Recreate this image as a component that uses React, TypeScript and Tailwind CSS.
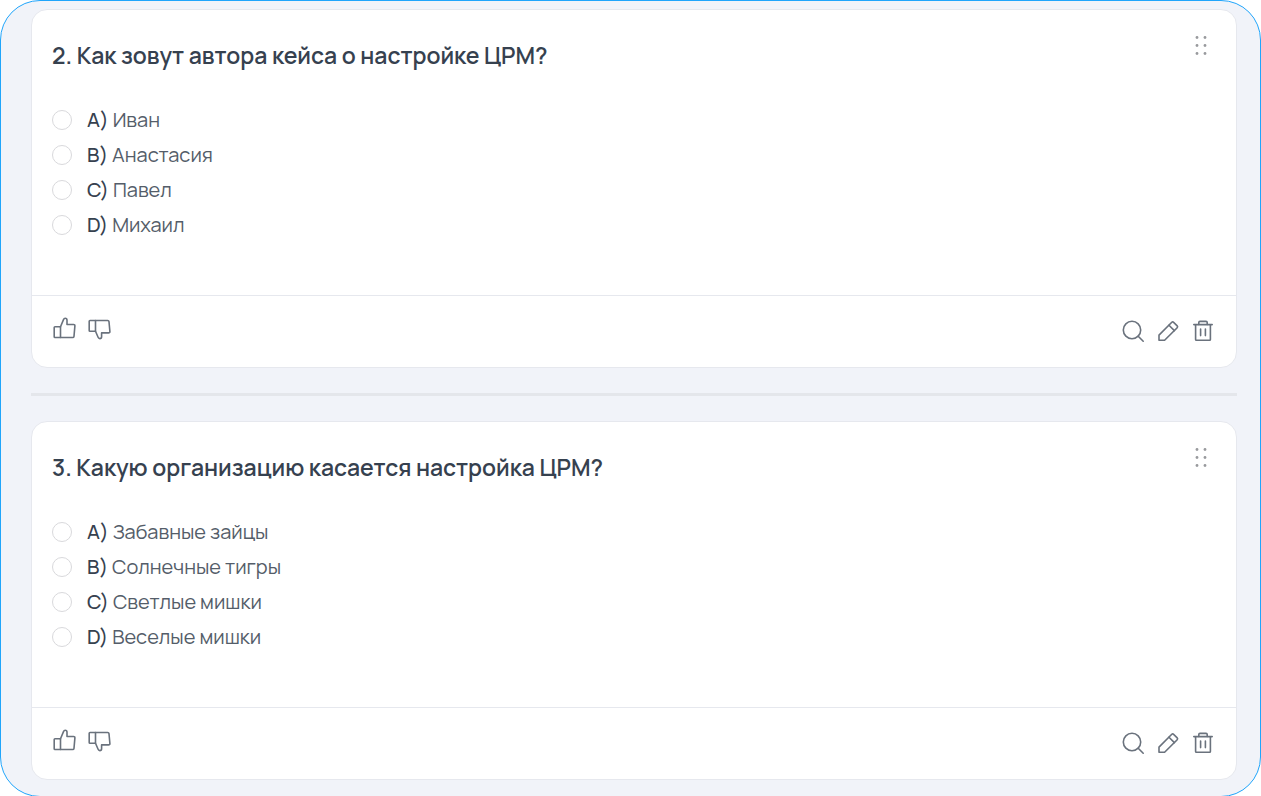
import React from "react";

type Question = {
  id: number;
  title: string;
  options: string[];
};

const questions: Question[] = [
  {
    id: 2,
    title: "Как зовут автора кейса о настройке ЦРМ?",
    options: ["Иван", "Анастасия", "Павел", "Михаил"],
  },
  {
    id: 3,
    title: "Какую организацию касается настройка ЦРМ?",
    options: [
      "Забавные зайцы",
      "Солнечные тигры",
      "Светлые мишки",
      "Веселые мишки",
    ],
  },
];

const letters = ["A", "B", "C", "D"];

type IconProps = { children: React.ReactNode };

const Icon = ({ children }: IconProps) => (
  <svg
    className="size-6"
    viewBox="0 0 24 24"
    fill="none"
    stroke="currentColor"
    strokeWidth="1.6"
    strokeLinejoin="round"
    strokeLinecap="round"
    aria-hidden="true"
  >
    {children}
  </svg>
);

const ThumbUp = () => (
  <Icon>
    <path d="M8.5 10.7H3a.8.8 0 0 0-.8.8v9.2a.8.8 0 0 0 .8.8h5.5z" />
    <path d="M8.5 10.7l3-7.1c.4-1 1-1.3 1.7-1.3 1.1 0 1.8.8 1.8 1.9v4.3h6.6c.8 0 1.4.6 1.3 1.4L22 20.3c-.1.7-.6 1.2-1.3 1.2H8.500" />
  </Icon>
);

const ThumbDown = () => (
  <Icon>
    <path d="M8.500 15.3H3a.8.8 0 0 1-.8-.8V5.3a.8.8 0 0 1 .8-.8h5.500z" />
    <path d="M8.500 15.3l2.6 6c.4 1 1 1.3 1.7 1.3 1.1 0 1.8-.8 1.8-1.9v-3.8h7c.8 0 1.4-.6 1.3-1.4L22 5.700c-.1-.7-.6-1.2-1.3-1.2H8.500" />
  </Icon>
);

const Search = () => (
  <Icon>
    <circle cx="11" cy="11" r="8.7" />
    <path d="M17.2 17.2l5 5" />
  </Icon>
);

const Pencil = () => (
  <Icon>
    <path d="M3 16.1L15.8 3.3a1.3 1.3 0 0 1 1.8 0l3.6 3.6a1.3 1.3 0 0 1 0 1.8L8.6 21.3H3z" />
    <path d="M13 6.2l5.4 5.4" />
  </Icon>
);

const Trash = () => (
  <Icon>
    <path d="M2.8 5.6h18.4" />
    <path d="M7.8 5.4V3.6c0-.7.5-1.2 1.2-1.2h6c.7 0 1.2.5 1.2 1.2v1.8" />
    <path d="M4.6 5.8v14.7c0 .5.3.8.8.8h13.2c.5 0 .8-.3.8-.8V5.8" />
    <path d="M9.6 10v6.6M14.4 10v6.6" />
  </Icon>
);

const DragHandle = () => (
  <svg className="h-5 w-4" viewBox="0 0 16 20" fill="#999a9e" aria-hidden="true">
    {[1.5, 9.5, 17.5].map((y) => (
      <g key={y}>
        <circle cx="3" cy={y} r="1.4" />
        <circle cx="11" cy={y} r="1.4" />
      </g>
    ))}
  </svg>
);

type IconButtonProps = { label: string; children: React.ReactNode };

const IconButton = ({ label, children }: IconButtonProps) => (
  <button type="button" aria-label={label}>
    {children}
  </button>
);

const QuestionCard = ({ question }: { question: Question }) => (
  <article className="rounded-2xl border border-[#e6e8ee] bg-white">
    <div className="flex items-start justify-between pt-[26px] pr-[26px] pl-5">
      <h2 className="text-[23px] leading-[38px] font-semibold text-[#36414f]">
        {question.id}. {question.title}
      </h2>
      <IconButton label="Переместить">
        <DragHandle />
      </IconButton>
    </div>
    <ul className="px-5 pt-7 pb-[53px]">
      {question.options.map((option, index) => (
        <li key={option}>
          <label className="flex h-[35px] items-center gap-[15px] text-[20px] text-[#545d69]">
            <input
              type="radio"
              name={`question-${question.id}`}
              className="size-5 appearance-none rounded-full border border-[#d9d9dc] bg-white checked:border-[6px] checked:border-[#1fa5ff]"
            />
            <span>
              <span className="font-medium text-[#36414f]">
                {letters[index]})
              </span>{" "}
              {option}
            </span>
          </label>
        </li>
      ))}
    </ul>
    <div className="flex h-[72px] items-center justify-between border-t border-[#e6e8ee] pr-[21px] pb-0.5 pl-5 text-[#6a727d]">
      <div className="flex gap-[11px] pb-1.5">
        <IconButton label="Нравится">
          <ThumbUp />
        </IconButton>
        <IconButton label="Не нравится">
          <ThumbDown />
        </IconButton>
      </div>
      <div className="flex gap-[11px]">
        <IconButton label="Найти">
          <Search />
        </IconButton>
        <IconButton label="Редактировать">
          <Pencil />
        </IconButton>
        <IconButton label="Удалить">
          <Trash />
        </IconButton>
      </div>
    </div>
  </article>
);

export default function App() {
  return (
    <main className="min-h-screen rounded-[40px] border border-[#20a5fb] bg-[#f1f3f9] pt-2 pr-[23px] pb-4 pl-[30px] font-['Manrope','Inter',sans-serif]">
      {questions.map((question, index) => (
        <React.Fragment key={question.id}>
          {index > 0 && (
            <hr className="my-[25px] h-[3px] border-0 bg-[#e4e6eb]" />
          )}
          <QuestionCard question={question} />
        </React.Fragment>
      ))}
    </main>
  );
}
